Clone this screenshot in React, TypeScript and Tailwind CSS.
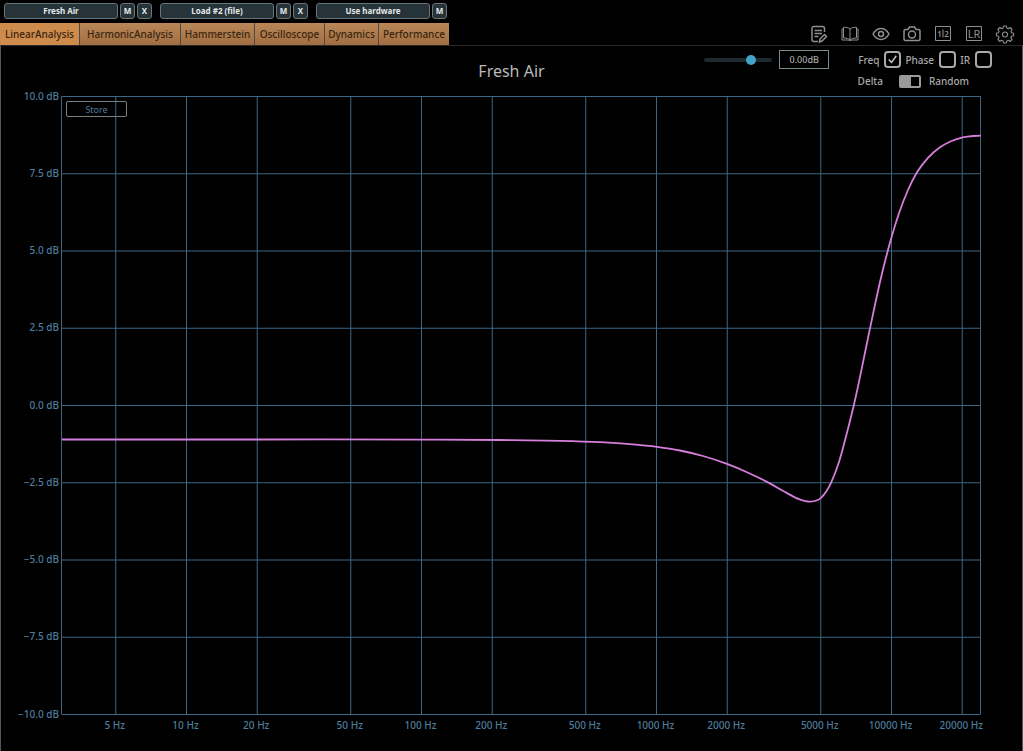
import { useState } from 'react';
import type { ReactNode } from 'react';

const slots = [
  { name: 'Fresh Air', actions: ['M', 'X'] },
  { name: 'Load #2 (file)', actions: ['M', 'X'] },
  { name: 'Use hardware', actions: ['M'] },
];

const tabs = ['LinearAnalysis', 'HarmonicAnalysis', 'Hammerstein', 'Oscilloscope', 'Dynamics', 'Performance'];

const PLOT = { left: 61.5, right: 980.5, top: 96.5, bottom: 714.5 };
const freqTicks = [5, 10, 20, 50, 100, 200, 500, 1000, 2000, 5000, 10000, 20000];
const dbTicks = [10, 7.5, 5, 2.5, 0, -2.5, -5, -7.5, -10];

const freqX = (hz: number) => 421.5 + 235 * Math.log10(hz / 100);
const dbY = (db: number) => PLOT.top + ((10 - db) / 20) * (PLOT.bottom - PLOT.top);

const response: [number, number][] = [
  [62, 439.5], [200, 439.5], [420, 439.6], [500, 440], [560, 440.8], [600, 442.2], [630, 444.1],
  [657, 446.8], [680, 450.5], [703, 456], [727, 463.9], [747, 472.2], [767, 481.9], [787, 493.1],
  [799, 499.1], [810, 501.6], [821, 497.8], [831, 482.8], [839, 462], [846, 436.5], [854, 404.5],
  [870, 328.5], [880, 282], [889, 246.2], [899, 213.2], [908, 190], [917, 172.3], [928, 157.8],
  [940, 147.2], [951, 141.2], [963, 137.4], [973, 136], [981, 135.6],
];

// Smooth line through the points, with tangents weighted for uneven spacing
function curvePath(pts: [number, number][]) {
  const slopes = pts.map(([x, y], i) => {
    if (i === 0 || i === pts.length - 1) return 0;
    const [px, py] = pts[i - 1];
    const [nx, ny] = pts[i + 1];
    const before = (y - py) / (x - px);
    const after = (ny - y) / (nx - x);
    return (before * (nx - x) + after * (x - px)) / (nx - px);
  });
  let d = `M${pts[0][0]} ${pts[0][1]}`;
  for (let i = 0; i < pts.length - 1; i++) {
    const [x0, y0] = pts[i];
    const [x1, y1] = pts[i + 1];
    const third = (x1 - x0) / 3;
    d += ` C${x0 + third} ${y0 + slopes[i] * third} ${x1 - third} ${y1 - slopes[i + 1] * third} ${x1} ${y1}`;
  }
  return d;
}

function Icon({ children }: { children: ReactNode }) {
  return (
    <svg viewBox="0 0 20 20" className="size-5" fill="none" stroke="currentColor" strokeWidth="1.2">
      {children}
    </svg>
  );
}

const tools = [
  {
    label: 'Notes',
    icon: (
      <Icon>
        <path d="M15.500 8V4.500a2 2 0 0 0-2-2H5a2 2 0 0 0-2 2v11a2 2 0 0 0 2 2h4M5.500 6.500H13M5.500 9.500H13M5.500 12.500h4" strokeWidth="1.5" />
        <path d="M10.500 18l.5-3 4.500-4.500 2 2L13 17z" strokeWidth="1.5" />
      </Icon>
    ),
  },
  {
    label: 'Manual',
    icon: (
      <Icon>
        <path d="M10 5C8.500 3.700 6.500 3.300 3.500 3.300V14c3 0 5 .6 6.500 2 1.500-1.400 3.500-2 6.500-2V3.300C13.500 3.300 11.500 3.700 10 5zM10 5v11M3.500 5h-1.500v11H8c1 0 1 .5 2 .5s1-.5 2-.5h6V5h-1.500" strokeWidth="1" />
      </Icon>
    ),
  },
  {
    label: 'View',
    icon: (
      <Icon>
        <path d="M2 10c2-3.500 4.500-5.500 8-5.500s6 2 8 5.500c-2 3.500-4.500 5.500-8 5.500S4 13.500 2 10z" strokeWidth="1.5" />
        <circle cx="10" cy="10" r="2.500" strokeWidth="1.500" />
      </Icon>
    ),
  },
  {
    label: 'Snapshot',
    icon: (
      <Icon>
        <path d="M3.500 5.500h2.500l1.500-2.500h5l1.500 2.500h2.500a1.500 1.500 0 0 1 1.500 1.500v8a1.500 1.500 0 0 1-1.500 1.500h-13A1.500 1.500 0 0 1 2 15V7a1.500 1.500 0 0 1 1.500-1.500z" strokeWidth="1.5" />
        <circle cx="10" cy="10.500" r="3.500" strokeWidth="1.500" />
      </Icon>
    ),
  },
  {
    label: 'Compare',
    icon: (
      <Icon>
        <path d="M2.500 2.500h15v14h-15zM10 5.500v8" strokeWidth="1" />
        <text x="6.500" y="13" textAnchor="middle" fontSize="8" fontWeight="600" fill="currentColor" stroke="none">1</text>
        <text x="13.500" y="13" textAnchor="middle" fontSize="8" fontWeight="600" fill="currentColor" stroke="none">2</text>
      </Icon>
    ),
  },
  {
    label: 'Channels',
    icon: (
      <Icon>
        <path d="M2.500 2.500h15v14h-15z" strokeWidth="1" />
        <text x="10" y="14" textAnchor="middle" fontSize="11" fill="currentColor" stroke="none">LR</text>
      </Icon>
    ),
  },
  {
    label: 'Settings',
    icon: (
      <Icon>
        <path d="M8.600 2h2.800l.4 2 1.600.7 1.700-1.200 2 2-1.200 1.700.7 1.600 2 .4v2.600l-2 .4-.7 1.600 1.200 1.700-2 2-1.700-1.200-1.600.7-.4 2H8.600l-.4-2-1.600-.7-1.700 1.200-2-2 1.200-1.700-.7-1.600-2-.4V9.200l2-.4.7-1.600-1.200-1.700 2-2 1.700 1.200 1.600-.7z" strokeWidth="1.1" strokeLinejoin="round" />
        <circle cx="10" cy="10.500" r="2.500" strokeWidth="1.100" />
      </Icon>
    ),
  },
];

function SlotBar() {
  return (
    <header className="flex h-[23px] gap-2 px-1 pt-[3px] text-[8px] font-bold text-[#e4e8e9]">
      {slots.map((slot) => (
        <div key={slot.name} className="flex h-4 gap-[2px]">
          <button className="w-[114px] rounded-[3px] border border-[#66757a] bg-[#263338] leading-none">{slot.name}</button>
          {slot.actions.map((action) => (
            <button key={action} className="w-[15px] rounded-[3px] border border-[#66757a] bg-[#263338] leading-none">
              {action}
            </button>
          ))}
        </div>
      ))}
    </header>
  );
}

function NavBar({ active, onSelect }: { active: string; onSelect: (tab: string) => void }) {
  return (
    <nav className="flex h-[22px] items-stretch justify-between">
      <div className="flex">
        {tabs.map((tab) => (
          <button
            key={tab}
            onClick={() => onSelect(tab)}
            className={`flex items-center justify-center border-r border-[#4d4a45] text-[10px] leading-none font-medium whitespace-nowrap text-[#3b2510] first:w-20 nth-2:w-[101px] nth-3:w-[74px] nth-4:w-[70px] nth-5:w-[54px] nth-6:w-[70px] last:border-r-0 ${
              tab === active ? 'bg-[#cd8b4c]' : 'bg-linear-to-b from-[#b98757] to-[#a06e42]'
            }`}
          >
            {tab}
          </button>
        ))}
      </div>
      <div className="flex gap-[11px] pr-2 text-[#8f8f8f]">
        {tools.map((tool) => (
          <button key={tool.label} aria-label={tool.label}>
            {tool.icon}
          </button>
        ))}
      </div>
    </nav>
  );
}

function Check({ label, checked = false }: { label: string; checked?: boolean }) {
  return (
    <label className="flex items-center gap-[5px]">
      {label}
      <span className="grid size-[17px] place-items-center">
        <input
          type="checkbox"
          defaultChecked={checked}
          className="peer col-start-1 row-start-1 size-[17px] appearance-none rounded-[4px] border-2 border-[#a9a9a9]"
        />
        <svg viewBox="0 0 18 18" className="pointer-events-none col-start-1 row-start-1 hidden size-[17px] peer-checked:block" fill="none" stroke="#c4c4c4" strokeWidth="1.600">
          <path d="M5 9l3 3 5-7" />
        </svg>
      </span>
    </label>
  );
}

function PlotControls() {
  const [gain, setGain] = useState(72);
  return (
    <div className="flex flex-col items-end gap-[3px] pr-[30px] text-[10px] leading-none font-medium text-[#a9a9a9]">
      <div className="flex h-[19px] items-center">
        <input
          type="range"
          aria-label="Gain"
          value={gain}
          onChange={(e) => setGain(Number(e.target.value))}
          className="mr-[7px] h-1 w-[68px] appearance-none rounded-full bg-[#1e2a2f] [&::-webkit-slider-thumb]:size-[10px] [&::-webkit-slider-thumb]:appearance-none [&::-webkit-slider-thumb]:rounded-full [&::-webkit-slider-thumb]:bg-[#42a2c8]"
        />
        <input
          aria-label="Gain value"
          defaultValue="0.00dB"
          className="mr-[29px] h-[19px] w-[50px] border border-[#7a878c] bg-black text-center text-[9px]"
        />
        <div className="flex gap-1">
          <Check label="Freq" checked />
          <Check label="Phase" />
          <Check label="IR" />
        </div>
      </div>
      <label className="mr-[23px] flex h-[18px] items-center">
        Delta
        <input type="checkbox" className="peer sr-only" />
        <span className="mr-2 ml-4 flex h-[13px] w-[22px] rounded-[2px] border-2 border-[#9b9b9b] peer-checked:flex-row-reverse">
          <span className="w-[10px] bg-[#9b9b9b]" />
        </span>
        Random
      </label>
    </div>
  );
}

function ResponseChart() {
  return (
    <svg viewBox="1 88 1021 662" className="block w-full" role="img" aria-label="Frequency response">
      <g stroke="#3e6785" fill="none">
        {freqTicks.map((hz) => (
          <line key={hz} x1={freqX(hz)} x2={freqX(hz)} y1={PLOT.top} y2={PLOT.bottom} />
        ))}
        {dbTicks.map((db) => (
          <line key={db} x1={PLOT.left} x2={PLOT.right} y1={dbY(db)} y2={dbY(db)} />
        ))}
        <line x1={PLOT.left} x2={PLOT.left} y1={PLOT.top} y2={PLOT.bottom} />
        <line x1={PLOT.right} x2={PLOT.right} y1={PLOT.top} y2={PLOT.bottom} />
      </g>
      <g fill="#4e7c9b" fontSize="10" fontWeight="500">
        {dbTicks.map((db) => (
          <text key={db} x="59" y={dbY(db) + 3} textAnchor="end">
            {db.toFixed(1).replace('-', '−')} dB
          </text>
        ))}
        {freqTicks.map((hz) => (
          <text key={hz} x={freqX(hz) - 1} y="729" textAnchor="middle">
            {hz} Hz
          </text>
        ))}
      </g>
      <path d={curvePath(response)} fill="none" stroke="#d67edb" strokeWidth="1.800" />
    </svg>
  );
}

export default function App() {
  const [active, setActive] = useState(tabs[0]);

  return (
    <div className="flex min-h-screen flex-col bg-black font-['Noto_Sans','Open_Sans',sans-serif]">
      <SlotBar />
      <NavBar active={active} onSelect={setActive} />
      <main className="grow border border-b-0 border-[#50595d] border-t-[#2a2a2a]">
        <div className="grid h-[42px] grid-cols-[1fr_auto_1fr] pt-1">
          <h1 className="col-start-2 pt-[9px] text-base leading-6 text-[#b9b9b9]">Fresh Air</h1>
          <PlotControls />
        </div>
        <div className="relative">
          <ResponseChart />
          <button className="absolute top-[13px] left-[65px] h-4 w-[61px] rounded-[2px] border border-[#7a7f82] text-[9px] leading-none text-[#4e7c9b]">
            Store
          </button>
        </div>
      </main>
    </div>
  );
}
